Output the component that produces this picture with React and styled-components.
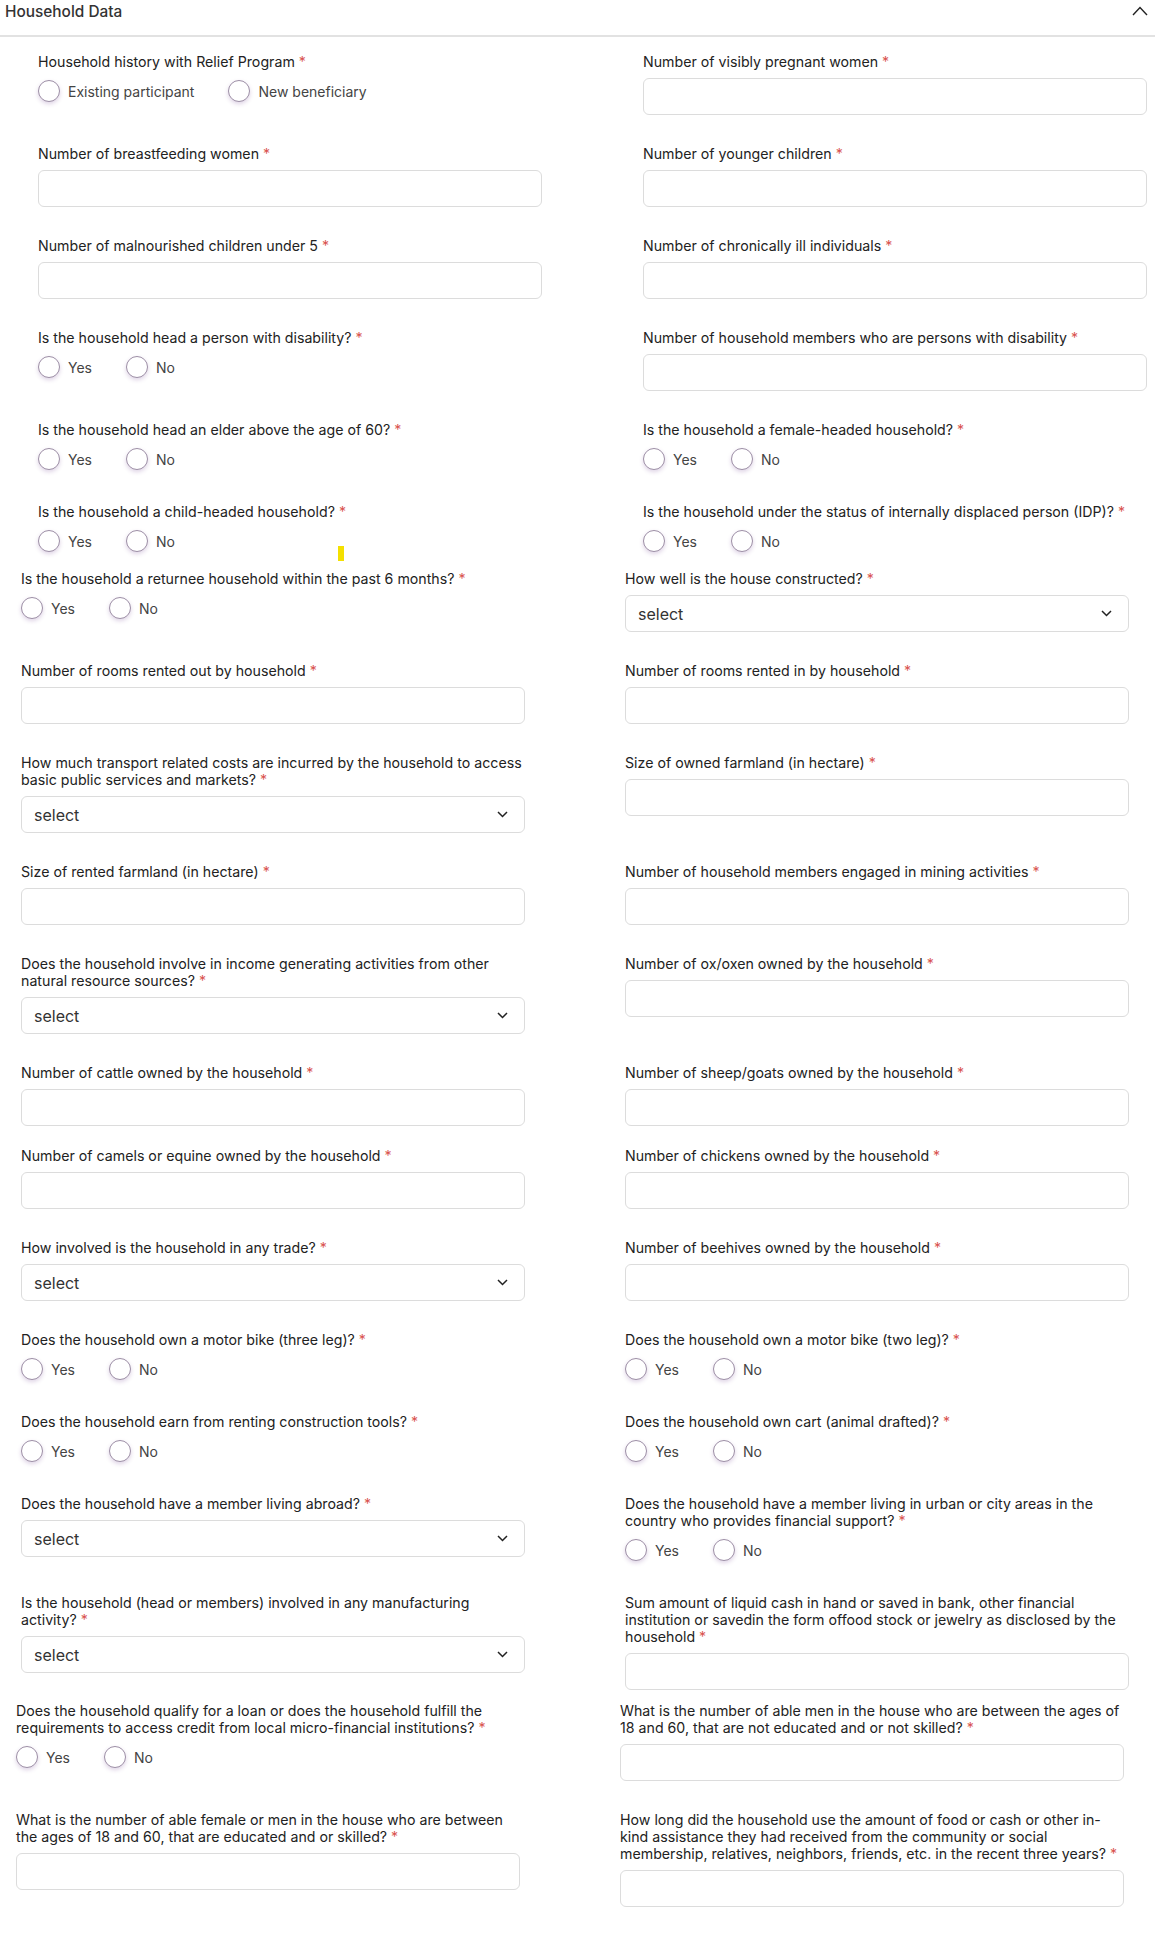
import React from 'react'
import styled, { createGlobalStyle } from 'styled-components'

const GlobalStyle = createGlobalStyle`
    html, body {
        margin: 0;
        padding: 0;
        background: #fff;
    }
    body {
        font-family: Inter, "Noto Sans", "Liberation Sans", sans-serif;
        color: #222;
    }
    * {
        box-sizing: border-box;
    }
`

const Panel = styled.div`
    width: 1155px;
    height: 1950px;
    overflow: hidden;
    background: #fff;
`

const Header = styled.div`
    display: flex;
    align-items: flex-start;
    justify-content: space-between;
    height: 37px;
    padding: 3px 7px 0 5px;
    border-bottom: 2px solid #e2e2e2;

    .title {
        font-size: 15.4px;
        line-height: 18px;
        font-weight: 500;
        color: #333;
    }

    svg {
        margin-top: 3px;
    }
`

const Section = styled.div`
    position: relative;
    display: grid;
    grid-template-columns: 504px 504px;
    column-gap: ${(p) => p.$gap}px;
    row-gap: 30px;
    padding-left: ${(p) => p.$indent}px;
    padding-top: ${(p) => p.$top || 0}px;
    margin-top: ${(p) => p.$pull || 0}px;
`

const Field = styled.div`
    display: flex;
    flex-direction: column;
`

const Label = styled.div`
    font-size: 14.2px;
    line-height: 17px;
    color: #222;
    white-space: nowrap;
    margin-bottom: 8px;

    .req {
        color: #d9534f;
    }
`

const Input = styled.input`
    width: 100%;
    height: 37px;
    border: 1px solid #dcdcdc;
    border-radius: 6px;
    background: #fff;
    outline: none;
`

const Select = styled.div`
    display: flex;
    align-items: center;
    justify-content: space-between;
    height: 37px;
    padding: 0 16px 0 12px;
    border: 1px solid #dcdcdc;
    border-radius: 6px;
    font-size: 16px;
    color: #333;
`

const RadioGroup = styled.div`
    display: flex;
    align-items: center;
    gap: 34px;
    height: 22px;
    margin: 2px 0 3px;
`

const Option = styled.label`
    display: flex;
    align-items: center;
    gap: 8px;
    font-size: 14px;
    color: #444;

    .dot {
        width: 22px;
        height: 22px;
        border-radius: 50%;
        border: 1px solid #9d8fa6;
        background: #fff;
        box-shadow: 0 2px 4px rgba(110, 60, 140, 0.22);
    }
`

const Marker = styled.div`
    position: absolute;
    left: 338px;
    top: 509px;
    width: 6px;
    height: 15px;
    background: #f4e000;
`

const ChevronDown = () => (
    <svg width="11" height="7" viewBox="0 0 11 7" fill="none">
        <path d="M1 1l4.5 4.5L10 1" stroke="#222" strokeWidth="1.5" />
    </svg>
)

const ChevronUp = () => (
    <svg width="16" height="10" viewBox="0 0 16 10" fill="none">
        <path d="M1 9l7-7.5L15 9" stroke="#222" strokeWidth="1.4" />
    </svg>
)

const FormField = ({ label, type, options }) => {
    const lines = Array.isArray(label) ? label : [label]
    return (
        <Field>
            <Label>
                {lines.map((line, i) => (
                    <React.Fragment key={i}>
                        {line}
                        {i < lines.length - 1 ? <br /> : <span className="req"> *</span>}
                    </React.Fragment>
                ))}
            </Label>
            {type === 'input' && <Input />}
            {type === 'select' && (
                <Select>
                    <span>select</span>
                    <ChevronDown />
                </Select>
            )}
            {type === 'radio' && (
                <RadioGroup>
                    {(options || ['Yes', 'No']).map((o) => (
                        <Option key={o}>
                            <span className="dot" />
                            {o}
                        </Option>
                    ))}
                </RadioGroup>
            )}
        </Field>
    )
}

const blocks = [
    {
        indent: 38,
        gap: 101,
        top: 16,
        pull: 0,
        marker: true,
        fields: [
            { type: 'radio', label: 'Household history with Relief Program', options: ['Existing participant', 'New beneficiary'] },
            { type: 'input', label: 'Number of visibly pregnant women' },
            { type: 'input', label: 'Number of breastfeeding women' },
            { type: 'input', label: 'Number of younger children' },
            { type: 'input', label: 'Number of malnourished children under 5' },
            { type: 'input', label: 'Number of chronically ill individuals' },
            { type: 'radio', label: 'Is the household head a person with disability?' },
            { type: 'input', label: 'Number of household members who are persons with disability' },
            { type: 'radio', label: 'Is the household head an elder above the age of 60?' },
            { type: 'radio', label: 'Is the household a female-headed household?' },
            { type: 'radio', label: 'Is the household a child-headed household?' },
            { type: 'radio', label: 'Is the household under the status of internally displaced person (IDP)?' }
        ]
    },
    {
        indent: 21,
        gap: 100,
        pull: 15,
        fields: [
            { type: 'radio', label: 'Is the household a returnee household within the past 6 months?' },
            { type: 'select', label: 'How well is the house constructed?' },
            { type: 'input', label: 'Number of rooms rented out by household' },
            { type: 'input', label: 'Number of rooms rented in by household' },
            { type: 'select', label: ['How much transport related costs are incurred by the household to access', 'basic public services and markets?'] },
            { type: 'input', label: 'Size of owned farmland (in hectare)' },
            { type: 'input', label: 'Size of rented farmland (in hectare)' },
            { type: 'input', label: 'Number of household members engaged in mining activities' },
            { type: 'select', label: ['Does the household involve in income generating activities from other', 'natural resource sources?'] },
            { type: 'input', label: 'Number of ox/oxen owned by the household' },
            { type: 'input', label: 'Number of cattle owned by the household' },
            { type: 'input', label: 'Number of sheep/goats owned by the household' }
        ]
    },
    {
        indent: 21,
        gap: 100,
        pull: 21,
        fields: [
            { type: 'input', label: 'Number of camels or equine owned by the household' },
            { type: 'input', label: 'Number of chickens owned by the household' },
            { type: 'select', label: 'How involved is the household in any trade?' },
            { type: 'input', label: 'Number of beehives owned by the household' },
            { type: 'radio', label: 'Does the household own a motor bike (three leg)?' },
            { type: 'radio', label: 'Does the household own a motor bike (two leg)?' },
            { type: 'radio', label: 'Does the household earn from renting construction tools?' },
            { type: 'radio', label: 'Does the household own cart (animal drafted)?' },
            { type: 'select', label: 'Does the household have a member living abroad?' },
            { type: 'radio', label: ['Does the household have a member living in urban or city areas in the', 'country who provides financial support?'] },
            { type: 'select', label: ['Is the household (head or members) involved in any manufacturing', 'activity?'] },
            { type: 'input', label: ['Sum amount of liquid cash in hand or saved in bank, other financial', 'institution or savedin the form offood stock or jewelry as disclosed by the', 'household'] }
        ]
    },
    {
        indent: 16,
        gap: 100,
        pull: 12,
        fields: [
            { type: 'radio', label: ['Does the household qualify for a loan or does the household fulfill the', 'requirements to access credit from local micro-financial institutions?'] },
            { type: 'input', label: ['What is the number of able men in the house who are between the ages of', '18 and 60, that are not educated and or not skilled?'] },
            { type: 'input', label: ['What is the number of able female or men in the house who are between', 'the ages of 18 and 60, that are educated and or skilled?'] },
            { type: 'input', label: ['How long did the household use the amount of food or cash or other in-', 'kind assistance they had received from the community or social', 'membership, relatives, neighbors, friends, etc. in the recent three years?'] }
        ]
    }
]

const App = () => {
    return (
        <Panel>
            <GlobalStyle />
            <Header>
                <div className="title">Household Data</div>
                <ChevronUp />
            </Header>
            {blocks.map((b, i) => (
                <Section key={i} $indent={b.indent} $gap={b.gap} $top={b.top} $pull={b.pull}>
                    {b.fields.map((f, j) => (
                        <FormField key={j} {...f} />
                    ))}
                    {b.marker && <Marker />}
                </Section>
            ))}
        </Panel>
    )
}

export default App
